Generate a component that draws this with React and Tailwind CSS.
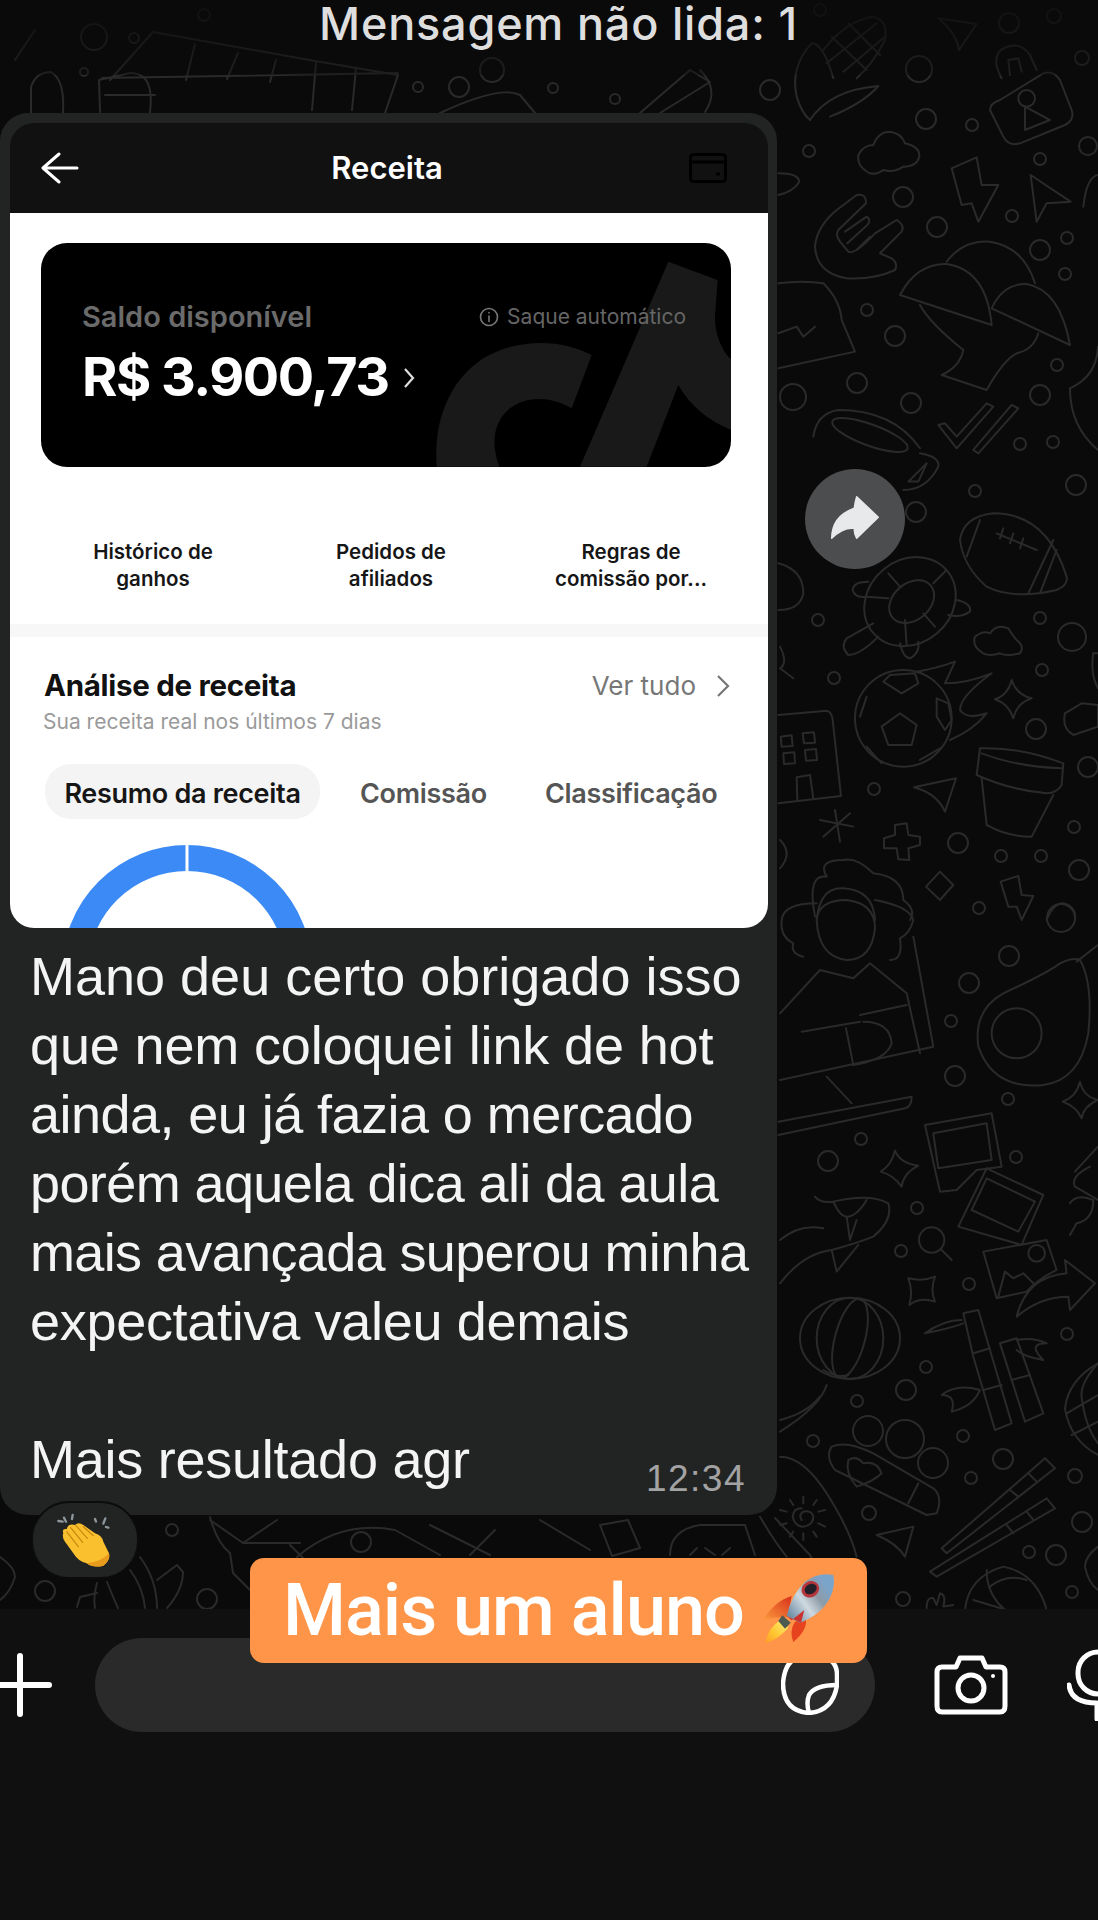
import React from "react";

const circles = [
  [94,37,13],[134,38,5],[204,15,6],[84,72,4],[418,87,5],[553,88,5],[615,99,5],[459,87,10],[492,70,12],
  [820,10,6],[919,69,13],[1009,23,10],[1054,16,7],[1082,58,7],[770,90,10],
  [926,119,10],[972,125,6],[809,151,6],[903,197,10],[937,227,10],[1040,159,6],[1088,146,9],[1012,216,6],[1067,238,6],[1040,250,10],[1065,274,6],[867,310,6],[895,336,10],[857,383,10],[793,397,13],[911,403,10],[1057,365,6],[1040,395,10],[1020,444,6],[1053,442,6],[1076,485,10],[975,491,6],[916,512,10],
  [818,620,6],[1040,618,6],[1072,637,14],[1042,670,6],[834,678,6],[1036,729,10],[874,789,6],[1088,767,10],[1074,827,6],[958,843,10],[1001,856,6],[1041,856,6],[1079,870,10],[979,908,6],
  [1061,918,14],[1009,956,10],[969,983,10],[951,1021,6],[955,1076,10],[1008,1099,6],[861,1139,6],[828,1161,10],[1016,1157,6],[917,1208,6],[901,1251,6],[969,1284,6],[1067,1334,6],[926,1367,6],[906,1390,10],
  [857,1401,6],[813,1441,6],[868,1431,15],[905,1439,19],[933,1463,15],[963,1436,6],[1003,1459,10],[971,1478,6],[1075,1476,7],[869,1513,7],[1082,1522,10],[1029,1552,6],[1056,1555,10],[903,1599,7],[1072,1592,6],
  [172,1530,6],[361,1542,10],[45,1591,10],[207,1599,10],
];

const z4 = [
  "M720 120 Q690 130 690 150 L730 230 Q745 260 780 250 L915 195 Q945 180 935 150 L900 60 Q880 30 850 40 Z",
  "M795 140 L795 210 L870 180 Z",
  "M330 340 Q290 320 295 285 Q310 255 340 255 Q355 215 390 215 Q425 220 435 250 Q480 260 478 290 Q470 320 430 320 Q400 340 370 330 Q350 345 330 340Z",
  "M575 325 L650 292 L665 375 L715 375 L655 485 L635 430 L605 435 Z",
  "M812 345 L932 425 L860 430 L830 485 Z",
  "M165 560 Q170 500 230 450 L290 405 Q320 400 318 430 L235 510 Q225 525 240 545 L265 575 Q285 585 345 520 L410 480 Q435 495 425 515 L360 580 L395 595 Q415 610 405 630 Q340 660 260 655 Q170 640 165 560Z",
  "M255 515 L320 470 Q335 480 322 495 L262 550","M290 570 L330 530",
  "M420 705 Q470 610 560 612 Q680 630 695 795 Z",
  "M560 605 Q610 540 690 545 Q790 560 825 670",
  "M695 745 Q730 670 800 672 Q900 690 930 855 Z",
  "M480 735 Q510 790 610 870 Q600 920 545 945 L680 990 Q730 900 770 880 Q820 870 835 820",
  "M535 1095 L590 1165 L700 1040 L680 1030 L590 1130 L555 1090 Z",
  "M640 1170 L655 1180 L775 1045 L755 1035 Z",
  "M160 1130 Q170 1060 235 1050 Q400 1050 480 1165",
  "M480 1180 Q540 1190 535 1220 Q500 1290 430 1290",
  "M445 1265 L500 1210 L475 1265Z",
  "M55 670 Q130 660 190 670 Q240 720 245 780 L285 875 L55 925",
  "M55 820 L110 800 L130 830 L165 800",
  "M55 340 Q115 340 118 365 Q100 395 55 405",
  "M970 440 Q980 350 1014 345",
  "M930 985 Q930 1100 1014 1170",
  "M1014 860 Q1010 950 930 985",
];

const z5 = [
  "M170 60 Q175 0 260 0 Q345 10 345 85 Q335 180 260 180 Q175 170 170 60Z",
  "M170 10 Q70 10 65 60 Q60 110 100 130 Q90 160 130 170",
  "M345 0 Q450 20 460 60 Q450 100 420 115 Q430 180 390 180",
  "M460 110 L520 440 L60 540",
  "M60 340 L180 210 L280 235 L330 190 L440 280 L480 460",
  "M125 395 L300 365","M300 345 L440 315","M258 385 L280 495",
  "M310 365 Q390 365 395 430 Q380 480 280 495","M200 530 L275 610",
  "M55 665 L455 590 Q455 620 435 625 L55 705",
  "M960 180 Q1000 250 985 400 Q960 540 850 555 Q700 570 655 440 Q640 330 730 280 Q860 220 900 190 Q940 170 960 180Z",
  "M950 185 L1014 135",
  "M960 545 Q970 590 1014 600 Q970 620 965 655 Q950 620 908 605 Q950 590 960 545Z",
  "M405 752 Q420 790 475 797 Q430 820 425 860 Q400 825 362 815 Q395 795 405 752Z",
  "M495 675 L695 640 L725 800 L650 810 L590 870 L540 875 Z",
  "M520 700 L680 670 L695 780 L535 805Z",
  "M680 805 L850 885 L785 1035 L595 980Z",
  "M680 835 L825 905 L775 995 L635 930Z",
  "M670 1055 L860 1020 L890 1110 Q830 1140 800 1175 L710 1195Z",
  "M715 1190 L735 1115 L760 1135 L790 1120 L820 1150",
  "M770 1250 Q800 1130 920 1120 L915 1080 L1005 1150 L930 1230 L925 1190 Q840 1190 770 1250Z",
  "M165 890 Q180 910 220 905 Q330 880 385 910 Q400 960 340 1010 Q290 1030 215 1050 Q130 1060 60 1150",
  "M60 1020 Q120 970 190 985","M215 1050 L230 1115 L295 1035",
  "M220 905 Q240 950 260 950 Q290 950 320 900","M260 950 L270 1020 L290 960",
  "M545 1050 L575 1080",
  "M445 1135 Q490 1145 525 1130 Q510 1170 525 1205 Q480 1190 448 1215 Q460 1175 445 1135Z",
  "M990 800 Q930 830 945 860 L1014 900","M1014 740 L945 815",
  "M930 910 Q950 880 1000 900 Q1000 960 950 970 L930 1005",
];

const z6 = [
  "M600 0 Q610 -70 700 -80 Q860 -80 920 110 Q925 135 890 150 Q760 180 680 140 Q610 80 600 0Z",
  "M710 -20 L830 30","M730 -35 L720 -5","M760 -20 L750 10","M790 -5 L780 25",
  "M805 160 L880 0","M840 160 L890 30","M620 50 L660 -60",
  "M340 250 L260 295 Q240 320 265 345 Q300 345 355 290",
  "M590 180 Q635 190 630 215 Q600 235 565 225",
  "M420 310 Q430 355 450 355 Q480 340 475 305",
  "M325 125 Q280 125 278 150 Q285 175 320 170",
  "M385 100 L420 140","M320 170 L385 175","M435 240 L440 315","M490 220 L525 260","M520 130 L560 90",
  "M670 340 Q635 320 645 290 Q670 270 690 280 Q710 250 745 265 Q760 290 770 300 Q795 320 780 340 Q740 350 720 340 Q690 350 670 340Z",
  "M420 520 L470 555 L455 615 L385 615 L365 560 Z",
  "M370 425 L425 460 L475 430 L465 400 L390 405 Z",
  "M530 475 L565 490 L575 540 L555 570 L530 530 Z",
  "M320 470 L300 530","M320 620 L365 670","M480 660 L540 625",
  "M470 395 Q530 385 585 365 L555 430 Q620 430 695 400 Q600 470 600 510 Q620 540 680 520 Q640 570 570 600",
  "M755 420 Q770 465 815 475 Q770 490 760 535 Q745 490 705 478 Q745 465 755 420Z",
  "M55 525 L200 512 Q215 515 218 540 L243 768 L55 790",
  "M62 590 L95 586 L98 618 L65 620Z","M128 580 L162 577 L165 608 L132 610Z","M70 640 L103 637 L105 670 L72 672Z","M135 630 L168 627 L171 660 L138 662Z",
  "M112 780 L110 712 L150 705 L160 775",
  "M462 742 L588 715 L555 815 Q530 760 462 742Z",
  "M660 625 Q780 620 910 670 L905 735 Q890 760 860 760 Q750 750 650 705 Z",
  "M665 640 Q770 680 905 685",
  "M665 715 L680 855 Q740 890 815 890 L880 765",
  "M405 855 L440 850 L445 885 L480 890 L480 915 L445 925 L448 960 L415 958 L410 925 L372 925 L372 895 L405 885Z",
  "M225 810 L240 905","M180 840 L280 860","M190 890 L270 820",
  "M540 995 L580 1035 L540 1080 L498 1040Z",
  "M722 1025 L775 1008 L785 1065 L820 1068 L785 1140 L770 1100 L745 1100Z",
  "M60 900 Q100 940 60 985",
  "M55 70 Q130 90 130 160 Q120 210 55 210",
  "M60 320 Q85 370 60 385 L100 415",
  "M915 520 L965 490 L1014 495 L1014 560 L940 585 Q905 565 915 520Z",
  "M1000 340 L1014 340","M1000 340 Q990 400 1014 445",
  "M165 1130 Q140 1000 200 1010 Q170 960 250 960 Q290 950 340 1000 Q430 1010 430 1080 Q470 1110 450 1140",
  "M170 1140 Q180 1040 250 1045 Q340 1050 345 1140",
  "M860 1140 Q880 1090 910 1090 Q950 1100 945 1140",
];

const z7 = [
  "M190 210 Q230 235 265 225","M200 255 Q180 320 60 395","M180 290 Q140 340 60 360",
  "M610 40 L655 30 L690 150 L755 370 L705 390 L640 170 Z","M640 160 L690 145","M670 270 L725 255",
  "M605 60 Q550 60 495 100 Q570 85 610 70",
  "M660 270 Q590 250 545 285 Q590 285 575 335 Q640 320 660 270",
  "M720 130 L770 115 L850 340 L795 365 Z","M755 240 L810 225",
  "M770 120 Q820 110 860 130 Q800 130 850 180 Q790 170 770 150",
  "M545 745 L855 475 L885 505 L560 760 Z","M750 570 L775 590","M805 520 L830 545",
  "M510 815 L860 595 L885 625 L530 830Z","M740 675 L760 700","M800 635 L820 660",
  "M215 440 Q260 420 340 460 L520 565 Q550 590 530 640 L500 645 L225 510 Q195 470 215 440Z",
  "M265 480 Q290 465 310 490 Q350 480 365 520 Q340 545 290 560 Q255 520 265 480Z",
  "M475 550 L445 610",
  "M350 705 L460 680 L435 770 Q410 730 350 705Z",
  "M615 930 Q625 830 730 800 Q830 820 860 930","M640 900 L740 930","M680 810 Q680 880 730 925","M690 860 Q740 820 800 840",
  "M60 470 Q130 470 200 580 Q270 690 290 770","M0 650 Q40 720 80 770",
  "M500 925 Q500 890 520 895 L530 915 L540 880 Q560 885 550 920 L580 915",
  "M90 600 L100 615","M130 590 L130 610","M170 600 L160 615","M60 630 L80 635","M195 630 L175 635","M60 675 L80 670","M195 680 L175 670","M90 710 L100 695","M130 720 L130 700","M170 710 L160 695",
  "M125 625 Q100 625 98 650 Q105 680 130 680 Q160 675 160 650 Q155 630 130 635 Q115 645 125 660",
  "M1014 190 Q925 240 915 325 Q930 420 1014 465","M1014 190 Q960 250 965 290 Q975 380 1014 430","M920 340 L1014 285","M935 405 L1014 365",
  "M1014 740 Q975 770 975 800 Q985 850 1014 870",
];

const top = [
  "M100 112 L99 80 L130 73 Q155 72 150 113",
  "M31 113 L31 87 Q36 72 51 72 Q65 80 63 113",
  "M110 80 L153 32","M153 32 L315 61 L398 75 L385 113",
  "M195 44 L186 80","M238 53 L227 79","M276 60 L270 82","M316 63 L312 110","M356 68 L352 110",
  "M102 78 L398 73","M105 95 L155 95",
  "M440 113 Q500 85 520 95 L535 113",
  "M640 113 L690 70 L710 82 L660 113",
  "M15 60 L35 30",
  "M705 112 Q720 90 700 70",
];

const band = [
  "M0 1557 Q15 1567 15 1577 Q10 1593 0 1600",
  "M140 1557 Q157 1580 157 1608","M130 1570 Q143 1587 145 1608","M107 1582 Q113 1597 118 1608","M97 1583 Q93 1597 95 1608",
  "M167 1608 Q183 1590 183 1572 L177 1565 L157 1580","M77 1607 L80 1597 L97 1593",
  "M210 1517 Q217 1543 230 1553 L233 1573 L250 1590",
  "M210 1520 L243 1543 L277 1520","M243 1543 L300 1543",
  "M297 1557 Q340 1520 395 1530 L440 1555","M430 1525 L490 1555","M290 1545 L330 1585",
  "M600 1525 L628 1520 L640 1548 L612 1556Z",
  "M670 1555 Q670 1530 700 1525 L745 1525 L755 1555",
  "M690 1555 L697 1548","M705 1548 L715 1555","M730 1548 L722 1555",
  "M495 1530 L470 1555","M540 1520 L590 1550",
  "M775 1518 L810 1555 L840 1610",
];

function Doodles() {
  const P = ({ d }) => <path d={d} />;
  return (
    <svg className="absolute inset-0 w-[1098px] h-[1920px]" viewBox="0 0 1098 1920" fill="none" stroke="#2a2a2b" strokeWidth="2" strokeLinecap="round" strokeLinejoin="round">
      {circles.map(([x, y, r], i) => <circle key={i} cx={x} cy={y} r={r} />)}
      {top.map((d, i) => <P key={i} d={d} />)}
      {band.map((d, i) => <P key={i} d={d} />)}
      <g transform="translate(760 60) scale(.3333)" strokeWidth="6">
        {z4.map((d, i) => <P key={i} d={d} />)}
        <circle cx="800" cy="115" r="25" />
        <ellipse cx="330" cy="1125" rx="120" ry="32" transform="rotate(20 330 1125)" />
      </g>
      <g transform="translate(760 0) scale(.3333)" strokeWidth="6">
        <path d="M190 150 Q260 60 340 50 Q385 60 375 120 Q340 190 290 235" />
        <path d="M220 235 Q190 130 155 130 Q90 200 110 290 Q125 340 150 360" />
        <path d="M150 360 Q210 270 355 258 Q310 310 210 350" />
        <path d="M215 110 L320 210 M265 70 L360 165 M200 190 L350 70 M250 215 L375 110" />
        <path d="M535 55 L650 72 L597 150 Q590 100 535 55Z" />
        <path d="M725 235 Q690 170 730 145 Q780 120 810 165 L830 210" />
        <path d="M750 225 L745 180 L775 175 L785 215" />
      </g>
      <g transform="translate(760 900) scale(.3333)" strokeWidth="6">
        {z5.map((d, i) => <P key={i} d={d} />)}
        <circle cx="770" cy="400" r="75" />
        <circle cx="830" cy="1060" r="25" />
        <circle cx="515" cy="1020" r="38" />
      </g>
      <g transform="translate(760 540) scale(.3333)" strokeWidth="6">
        {z6.map((d, i) => <P key={i} d={d} />)}
        <ellipse cx="455" cy="185" rx="75" ry="55" transform="rotate(-40 455 185)" />
        <ellipse cx="450" cy="185" rx="145" ry="125" transform="rotate(-40 450 185)" />
        <circle cx="430" cy="535" r="145" />
      </g>
      <g transform="translate(760 1300) scale(.3333)" strokeWidth="6">
        {z7.map((d, i) => <P key={i} d={d} />)}
        <ellipse cx="270" cy="115" rx="150" ry="122" />
        <ellipse cx="270" cy="115" rx="100" ry="122" />
        <ellipse cx="270" cy="115" rx="45" ry="122" transform="rotate(15 270 115)" />
      </g>
    </svg>
  );
}

function Clap() {
  return (
    <svg width="90" height="70" viewBox="0 0 270 210">
      <g stroke="#8d979c" strokeWidth="7" strokeLinecap="round">
        <path d="M55 48 L68 50 M72 38 L78 50 M98 30 L96 42 M165 42 L168 50 M196 40 L190 56 M205 68 L198 66" />
      </g>
      <path d="M70 85 Q65 70 80 72 Q85 55 105 60 Q115 50 130 60 L165 85 Q185 90 190 110 L207 145 Q212 165 190 182 Q160 190 140 175 Q115 170 100 145 L75 110 Q65 95 70 85Z" fill="#fbc02d" />
      <path d="M140 175 Q160 190 190 182 Q212 165 207 145 Q185 170 140 175Z" fill="#e89b1c" />
      <path d="M80 80 L115 125 M92 68 L128 112 M108 62 L142 100 M130 65 L160 92" stroke="#c98a12" strokeWidth="4" fill="none" strokeLinecap="round" />
    </svg>
  );
}

function Rocket() {
  return (
    <svg width="110" height="100" viewBox="0 0 330 300" className="shrink-0">
      <defs>
        <linearGradient id="rocketBody" x1="0.1" y1="0.9" x2="0.9" y2="0.3">
          <stop offset="0" stopColor="#6f8ea6" />
          <stop offset="0.4" stopColor="#cfd9e0" />
          <stop offset="0.7" stopColor="#8e9ba6" />
          <stop offset="1" stopColor="#7ba4cb" />
        </linearGradient>
        <linearGradient id="rocketFlame" x1="1" y1="0" x2="0" y2="1">
          <stop offset="0" stopColor="#fff07a" />
          <stop offset="0.6" stopColor="#ffc52e" />
          <stop offset="1" stopColor="#ff9a2a" />
        </linearGradient>
        <linearGradient id="rocketFin" x1="1" y1="0" x2="0" y2="1">
          <stop offset="0" stopColor="#d82f1c" />
          <stop offset="1" stopColor="#fb9a3b" />
        </linearGradient>
      </defs>
      <path d="M140 105 Q90 120 55 175 Q100 168 128 168 Z" fill="url(#rocketFin)" />
      <path d="M182 172 Q190 205 145 243 Q132 210 150 182 Z" fill="#e8431f" />
      <path d="M105 178 Q70 200 60 247 Q100 235 130 200 Z" fill="url(#rocketFlame)" />
      <path d="M112 163 L137 185 L120 203 L100 180Z" fill="#4c5a50" />
      <path d="M265 42 Q220 32 180 62 Q140 100 125 165 L165 185 Q230 160 255 110 Q272 75 265 42Z" fill="url(#rocketBody)" />
      <path d="M125 165 L140 178 L178 147 L168 185 Z" fill="#c9322d" />
      <ellipse cx="196" cy="85" rx="27" ry="24" fill="#b5353a" transform="rotate(-30 196 85)" />
      <ellipse cx="197" cy="84" rx="19" ry="15" fill="#23202a" transform="rotate(-30 197 84)" />
    </svg>
  );
}

function TikTok() {
  return (
    <svg className="absolute left-0 top-0 w-[690px] h-[224px]" viewBox="0 0 690 224">
      <g transform="translate(379 -3) scale(.3333)" fill="#191919">
        <path d="M515 345 C430 300 300 290 190 355 C90 420 40 540 50 680 L238 680 C215 620 215 550 270 505 C320 465 400 470 455 505 Z" />
        <path d="M745 65 L893 120 L885 230 Q885 300 925 350 L935 360 V570 Q830 530 775 435 L680 680 L480 680 Z" />
      </g>
    </svg>
  );
}

export default function App() {
  return (
    <div className="relative w-full h-[1920px] overflow-hidden bg-[#0a0a0b] flex flex-col font-['Inter',sans-serif]">
      <Doodles />
      <div className="absolute top-0 left-0 w-full h-[75px] bg-gradient-to-b from-[#0a0a0bd9] to-[#0a0a0b55]" />

      <div className="relative h-[113px] shrink-0 flex justify-center">
        <span className="pl-[19px] text-[45px] leading-[48px] font-medium text-[#dedede] tracking-[0.8px]">Mensagem não lida: 1</span>
      </div>

      {/* bubble */}
      <div className="relative w-[777px] h-[1402px] shrink-0 bg-[#222423] rounded-[28px] pt-[10px] px-[10px]">
        <div className="w-[758px] rounded-[24px] overflow-hidden">
          <div className="h-[90px] bg-[#111111] flex items-center justify-between pl-[31px] pr-[41px]">
            <svg width="38" height="32" viewBox="0 0 38 32" fill="none" stroke="#fff" strokeWidth="3" strokeLinecap="round" strokeLinejoin="round">
              <path d="M36 16 H3 M18 2 L2 16 L18 30" />
            </svg>
            <span className="ml-[6px] text-[31px] leading-[36px] font-semibold text-white">Receita</span>
            <svg width="38" height="30" viewBox="0 0 38 30" fill="none" stroke="#000" strokeWidth="3">
              <rect x="1.5" y="1.5" width="35" height="27" rx="3" />
              <path d="M1.5 9 H36.5 M27 21 H31" />
            </svg>
          </div>
          <div className="h-[715px] bg-white overflow-hidden pt-[30px]">
            <div className="relative ml-[31px] w-[690px] h-[224px] bg-black rounded-[26px] overflow-hidden">
              <TikTok />
              <div className="relative flex justify-between items-center pt-[56px] pl-[41px] pr-[45px]">
                <span className="text-[29px] leading-[36px] font-semibold text-[#6b6b6b]">Saldo disponível</span>
                <span className="flex items-center gap-[8px] text-[21px] leading-[36px] text-[#666666]">
                  <svg width="20" height="20" viewBox="0 0 20 20" fill="none" stroke="#777" strokeWidth="1.6" strokeLinecap="round">
                    <circle cx="10" cy="10" r="8.5" />
                    <path d="M10 9 V14.5 M10 5.6 V6" />
                  </svg>
                  Saque automático
                </span>
              </div>
              <div className="relative flex items-center pl-[41px] mt-[9px]">
                <span className="text-[54px] leading-[66px] font-bold text-white tracking-[-1.5px]">R$ 3.900,73</span>
                <svg className="ml-[14px] mt-[2px]" width="12" height="22" viewBox="0 0 12 22" fill="none" stroke="#ddd" strokeWidth="2.2">
                  <path d="M2 2 L10 11 L2 20" />
                </svg>
              </div>
            </div>

            <div className="flex pl-[73px] mt-[71px] text-[20.5px] leading-[27px] font-semibold text-[#161616] text-center">
              <div className="w-[140px] shrink-0">Histórico de<br />ganhos</div>
              <div className="w-[140px] shrink-0 ml-[98px]">Pedidos de<br />afiliados</div>
              <div className="w-[180px] shrink-0 ml-[80px]">Regras de<br />comissão por...</div>
            </div>

            <div className="mt-[32px] h-[13px] bg-[#f7f7f7]" />

            <div className="flex items-center justify-between pl-[34px] pr-[38px] pt-[31px]">
              <span className="text-[29.5px] leading-[34px] font-bold text-[#111111] tracking-[-0.3px]">Análise de receita</span>
              <span className="relative top-[1px] flex items-center gap-[20px] text-[26px] leading-[34px] text-[#777777]">
                Ver tudo
                <svg width="14" height="24" viewBox="0 0 14 24" fill="none" stroke="#777" strokeWidth="2.2">
                  <path d="M2 2 L12 12 L2 22" />
                </svg>
              </span>
            </div>
            <div className="pl-[33px] mt-[6px] text-[21px] leading-[28px] text-[#9a9a9a]">Sua receita real nos últimos 7 dias</div>

            <div className="flex items-center mt-[28px] ml-[35px] text-[27px] font-semibold tracking-[-0.3px]">
              <div className="h-[55px] w-[275px] shrink-0 rounded-[26px] bg-[#f4f4f4] flex items-center justify-center text-[#161616] pt-[5px]">Resumo da receita</div>
              <div className="ml-[40px] shrink-0 text-[#555555] pt-[5px]">Comissão</div>
              <div className="ml-[58px] shrink-0 text-[#555555] pt-[5px]">Classificação</div>
            </div>

            <svg className="ml-[50px] mt-[26px]" width="260" height="260" viewBox="0 0 260 260" fill="none">
              <circle cx="127" cy="125" r="112" stroke="#3b8af5" strokeWidth="26" />
              <path d="M127 0 V26" stroke="#fff" strokeWidth="3" />
            </svg>
          </div>
        </div>

        <div className="pl-[20px] pt-[14px] text-[54px] leading-[69px] text-[#f4f4f4] font-['Liberation_Sans',sans-serif]">
          <div>Mano deu certo obrigado isso</div>
          <div className="tracking-[-0.15px]">que nem coloquei link de hot</div>
          <div className="tracking-[-0.55px]">ainda, eu já fazia o mercado</div>
          <div className="tracking-[-0.6px]">porém aquela dica ali da aula</div>
          <div className="tracking-[-0.63px]">mais avançada superou minha</div>
          <div className="tracking-[-0.3px]">expectativa valeu demais</div>
          <div className="h-[69px]" />
          <div className="flex justify-between items-end pr-[21px]">
            <span className="tracking-[-0.25px]">Mais resultado agr</span>
            <span className="text-[37px] leading-[30px] text-[#a3a3a3] tracking-[1.5px]">12:34</span>
          </div>
        </div>
      </div>

      {/* reaction */}
      <div className="absolute left-[31px] top-[1501px] w-[108px] h-[78px] rounded-[38px] bg-[#222423] border-[2px] border-[#0c0c0c] flex items-center justify-center">
        <Clap />
      </div>

      {/* forward */}
      <div className="absolute left-[805px] top-[469px] w-[100px] h-[100px] rounded-full bg-[#4c4d4f] flex items-center justify-center">
        <svg width="100" height="100" viewBox="0 0 100 100">
          <path d="M51.7 27.7 L73.3 48.3 L51.7 69.3 Q49 65 49.3 59.3 Q38 58 26.7 69.3 Q27 47 49.3 39.3 Q50 33 51.7 27.7Z" fill="#e8e9ea" stroke="#e8e9ea" strokeWidth="1.5" strokeLinejoin="round" />
        </svg>
      </div>

      {/* composer */}
      <div className="relative mt-auto h-[311px] shrink-0 bg-[#101010] pt-[29px]">
        <div className="flex items-center">
          <svg className="shrink-0" width="52" height="64" viewBox="0 0 52 64" fill="none" stroke="#fff" strokeWidth="6" strokeLinecap="round">
            <path d="M20 3 V61 M0 32 H49" />
          </svg>
          <div className="ml-[43px] w-[780px] h-[94px] shrink-0 rounded-[47px] bg-[#2a2a2a] flex items-center justify-end pr-[36px]">
            <svg width="58" height="60" viewBox="0 0 58 60" fill="none" stroke="#fff" strokeWidth="4.5" strokeLinejoin="round">
              <path d="M20 2 H40 Q56 4 56 20 V30 Q52 56 28 58 Q2 56 2 28 Q4 4 20 2Z" />
              <path d="M56 30 Q34 30 28 40 Q25 48 28 58" />
            </svg>
          </div>
          <svg className="ml-[59px] shrink-0" width="74" height="60" viewBox="0 0 74 60" fill="none" stroke="#fff" strokeWidth="5" strokeLinejoin="round">
            <path d="M8 12 H22 L26 3 H48 L52 12 H66 Q71 12 71 17 V51 Q71 57 66 57 H8 Q3 57 3 51 V17 Q3 12 8 12Z" />
            <circle cx="37" cy="33" r="13" />
            <circle cx="59" cy="21" r="2" fill="#fff" stroke="none" />
          </svg>
          <svg className="ml-[59px] shrink-0" width="40" height="72" viewBox="0 0 40 72" fill="none" stroke="#fff" strokeWidth="5" strokeLinecap="round">
            <rect x="11" y="3" width="40" height="42" rx="20" />
            <path d="M2 36 Q4 54 30 54 M30 54 V70" />
          </svg>
        </div>
      </div>

      {/* orange caption */}
      <div className="absolute left-[250px] top-[1558px] w-[617px] h-[105px] rounded-[14px] bg-[#ff9548] flex items-center justify-between pl-[33px] pr-[12px] font-['Roboto',sans-serif]">
        <span className="text-[72px] leading-[80px] font-medium text-white tracking-[-1px]">Mais um aluno</span>
        <Rocket />
      </div>
    </div>
  );
}
